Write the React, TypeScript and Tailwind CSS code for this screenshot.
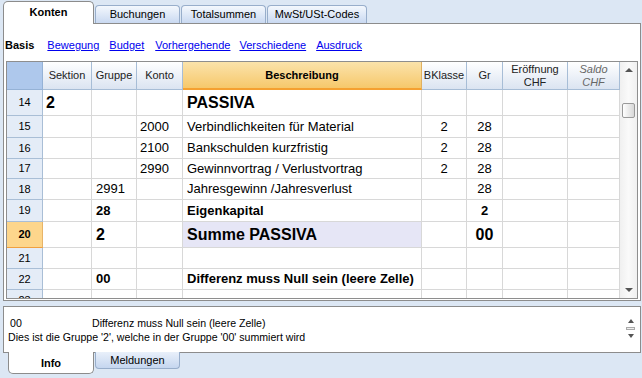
import React from "react";

const F = { fontFamily: '"Liberation Sans", Arial, sans-serif' };

type Cell = { t?: string; cls?: string };
type RowDef = {
  n: string;
  h: string;
  s?: Cell;
  g?: Cell;
  k?: Cell;
  d?: Cell;
  b?: Cell;
  r?: Cell;
  hl?: boolean;
  dbg?: string;
};

const rows: RowDef[] = [
  { n: "14", h: "h-[26px]", s: { t: "2", cls: "font-bold text-[16px]" }, d: { t: "PASSIVA", cls: "font-bold text-[16px]" } },
  { n: "15", h: "h-[22px]", k: { t: "2000" }, d: { t: "Verbindlichkeiten für Material" }, b: { t: "2" }, r: { t: "28" } },
  { n: "16", h: "h-[21px]", k: { t: "2100" }, d: { t: "Bankschulden kurzfristig" }, b: { t: "2" }, r: { t: "28" } },
  { n: "17", h: "h-[20px]", k: { t: "2990" }, d: { t: "Gewinnvortrag / Verlustvortrag" }, b: { t: "2" }, r: { t: "28" } },
  { n: "18", h: "h-[21px]", g: { t: "2991" }, d: { t: "Jahresgewinn /Jahresverlust" }, r: { t: "28" } },
  { n: "19", h: "h-[22px]", g: { t: "28", cls: "font-bold" }, d: { t: "Eigenkapital", cls: "font-bold" }, r: { t: "2", cls: "font-bold" } },
  { n: "20", h: "h-[26px]", hl: true, g: { t: "2", cls: "font-bold text-[16px]" }, d: { t: "Summe PASSIVA", cls: "font-bold text-[16px]" }, r: { t: "00", cls: "font-bold text-[16px]" }, dbg: "bg-[#e6e6f6]" },
  { n: "21", h: "h-[21px]" },
  { n: "22", h: "h-[21px]", g: { t: "00", cls: "font-bold" }, d: { t: "Differenz muss Null sein (leere Zelle)", cls: "font-bold" } },
  { n: "23", h: "h-[21px]" },
];

const body = "box-border border-r border-b border-[#d8d8d8] flex items-center overflow-hidden whitespace-nowrap text-[13px] text-black";

function Row({ r }: { r: RowDef }) {
  return (
    <div className={`flex shrink-0 ${r.h}`}>
      <div
        className={`w-[36px] box-border border-r border-b flex items-center justify-center text-[11px] ${
          r.hl ? "bg-[#fdd68c] border-r-[#e8b468] border-b-[#f0a040] font-bold" : "bg-[#e4ecf7] border-[#a9bed6]"
        }`}
      >
        {r.n}
      </div>
      <div className={`w-[49px] pl-[3px] ${body} ${r.s?.cls ?? ""}`}>{r.s?.t}</div>
      <div className={`w-[45px] pl-[4px] ${body} ${r.g?.cls ?? ""}`}>{r.g?.t}</div>
      <div className={`w-[46px] pl-[3px] ${body} ${r.k?.cls ?? ""}`}>{r.k?.t}</div>
      <div className={`w-[239px] pl-[4px] ${body} ${r.dbg ?? ""} ${r.d?.cls ?? ""}`}>{r.d?.t}</div>
      <div className={`w-[45px] justify-center ${body} ${r.b?.cls ?? ""}`}>{r.b?.t}</div>
      <div className={`w-[36px] justify-center ${body} ${r.r?.cls ?? ""}`}>{r.r?.t}</div>
      <div className={`w-[65px] ${body}`}></div>
      <div className={`w-[52px] ${body}`}></div>
    </div>
  );
}

const hdr =
  "box-border border-r border-b border-[#a7bdd6] bg-gradient-to-b from-[#ffffff] to-[#dbe4f1] flex items-center justify-center text-center text-[11px] leading-[13px] text-[#222]";

function Scrollbar({ thumbTop, h }: { thumbTop: string; h: string }) {
  return (
    <div className={`w-[17px] ${h} bg-gradient-to-r from-[#f0f0f0] via-[#fafafa] to-[#f0f0f0] flex flex-col items-center relative`}>
      <div className="mt-[6px] w-0 h-0 border-l-[4px] border-r-[4px] border-b-[4px] border-l-transparent border-r-transparent border-b-[#555]" />
      <div className={`absolute left-[2px] ${thumbTop} w-[13px] h-[15px] rounded-[2px] border border-[#9a9a9a] bg-gradient-to-r from-[#ffffff] to-[#d8d8d8]`} />
      <div className="mt-auto mb-[6px] w-0 h-0 border-l-[4px] border-r-[4px] border-t-[4px] border-l-transparent border-r-transparent border-t-[#555]" />
    </div>
  );
}

export default function App() {
  return (
    <div className="w-[642px] h-[378px] bg-[#dce7f4] overflow-hidden" style={F}>
      {/* top tabs */}
      <div className="h-[23px] flex items-end pl-[3px] relative z-10">
        <div className="w-[91px] h-[23px] bg-white border border-b-0 border-[#8c8c8c] rounded-t-[5px] flex items-center justify-center text-[11px] font-bold -mb-px pb-[1px]">
          Konten
        </div>
        <div className="ml-[1px] w-[85px] h-[18px] border border-b-0 border-[#98aecb] rounded-t-[4px] bg-gradient-to-b from-[#f4f8fd] to-[#c9d9f1] flex items-center justify-center text-[11px]">
          Buchungen
        </div>
        <div className="ml-[1px] w-[85px] h-[18px] border border-b-0 border-[#98aecb] rounded-t-[4px] bg-gradient-to-b from-[#f4f8fd] to-[#c9d9f1] flex items-center justify-center text-[11px]">
          Totalsummen
        </div>
        <div className="ml-[1px] w-[100px] h-[18px] border border-b-0 border-[#98aecb] rounded-t-[4px] bg-gradient-to-b from-[#f4f8fd] to-[#c9d9f1] flex items-center justify-center text-[11px]">
          MwSt/USt-Codes
        </div>
      </div>

      {/* panel */}
      <div className="ml-[3px] w-[638px] h-[278px] bg-white border border-[#8c8c8c] box-border flex flex-col">
        <div className="h-[37px] shrink-0 flex items-center pt-[5px] pl-[1px] text-[11px]">
          <span className="font-bold">Basis</span>
          <span className="ml-[13px] text-[#0000ee] underline">Bewegung</span>
          <span className="ml-[10px] text-[#0000ee] underline">Budget</span>
          <span className="ml-[11px] text-[#0000ee] underline">Vorhergehende</span>
          <span className="ml-[9px] text-[#0000ee] underline">Verschiedene</span>
          <span className="ml-[10px] text-[#0000ee] underline">Ausdruck</span>
        </div>
        <div className="ml-[2px] w-[632px] h-[238px] border border-[#8e8e8e] box-border flex">
          <div className="w-[613px] flex flex-col overflow-hidden">
            <div className="flex h-[28px] shrink-0">
              <div className="w-[36px] box-border border-r border-b border-[#95b2d6] bg-[#aec8ec]" />
              <div className={`w-[49px] ${hdr}`}>Sektion</div>
              <div className={`w-[45px] ${hdr}`}>Gruppe</div>
              <div className={`w-[46px] ${hdr}`}>Konto</div>
              <div className="w-[239px] box-border border-r border-b-2 border-r-[#e0b060] border-b-[#f5a030] bg-gradient-to-b from-[#fbe3aa] to-[#f6c86a] flex items-center justify-center text-[11px] font-bold">
                Beschreibung
              </div>
              <div className={`w-[45px] ${hdr}`}>BKlasse</div>
              <div className={`w-[36px] ${hdr}`}>Gr</div>
              <div className={`w-[65px] ${hdr}`}>
                Eröffnung
                <br />
                CHF
              </div>
              <div className={`w-[52px] ${hdr} italic text-[#666]`}>
                Saldo
                <br />
                CHF
              </div>
            </div>
            {rows.map((r) => (
              <Row key={r.n} r={r} />
            ))}
          </div>
          <Scrollbar thumbTop="top-[41px]" h="h-[236px]" />
        </div>
      </div>

      {/* info box */}
      <div className="ml-[3px] mt-[5px] w-[638px] h-[47px] bg-white border border-[#8c8c8c] box-border flex relative z-0">
        <div className="flex-1 pl-[6px] pt-[9px] text-[10.6px] leading-[14px]">
          <div className="flex">
            <span className="w-[82px]">00</span>
            <span>Differenz muss Null sein (leere Zelle)</span>
          </div>
          <div className="-ml-[2px]">Dies ist die Gruppe '2', welche in der Gruppe '00' summiert wird</div>
        </div>
        <div className="w-[17px] flex flex-col items-center mr-[1px] relative">
          <div className="mt-[12px] w-0 h-0 border-l-[3px] border-r-[3px] border-b-[4px] border-l-transparent border-r-transparent border-b-[#555]" />
          <div className="mt-[4px] w-[9px] h-[3px] border border-[#aaa] bg-[#eee]" />
          <div className="mt-[4px] w-0 h-0 border-l-[3px] border-r-[3px] border-t-[4px] border-l-transparent border-r-transparent border-t-[#555]" />
        </div>
      </div>

      {/* bottom tabs */}
      <div className="flex pl-[8px] relative z-10 -mt-px">
        <div className="w-[86px] h-[22px] bg-white border border-t-0 border-[#8c8c8c] rounded-b-[5px] flex items-center justify-center text-[11px] font-bold pt-[2px]">
          Info
        </div>
        <div className="ml-[1px] w-[85px] h-[17px] border border-t-0 border-[#98aecb] rounded-b-[4px] bg-gradient-to-b from-[#e9f0fa] to-[#c5d6ef] flex items-center justify-center text-[11px]">
          Meldungen
        </div>
      </div>
    </div>
  );
}
